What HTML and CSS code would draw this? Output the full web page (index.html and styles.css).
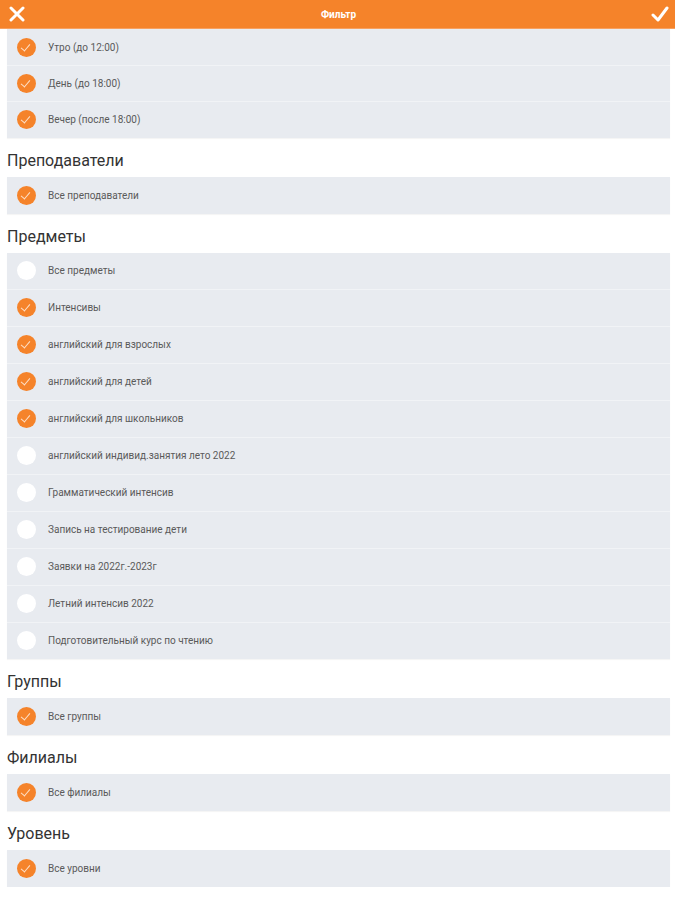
FILE: index.html
```html
<!DOCTYPE html>
<html lang="ru">
<head>
<meta charset="utf-8">
<title>Фильтр</title>
<link rel="stylesheet" href="styles.css">
</head>
<body>
<header class="topbar">
  <button class="icon-btn" aria-label="Закрыть">
    <svg width="16" height="16" viewBox="0 0 16 16"><path d="M2 2 L14 14 M14 2 L2 14" stroke="#fff" stroke-width="3" stroke-linecap="round"/></svg>
  </button>
  <div class="title">Фильтр</div>
  <button class="icon-btn" aria-label="Применить">
    <svg width="18" height="16" viewBox="0 0 18 16"><path d="M2 9 L7 14 L16 2" stroke="#fff" stroke-width="3" fill="none" stroke-linecap="round" stroke-linejoin="round"/></svg>
  </button>
</header>
<main class="content">
  <section class="card first">
    <div class="row"><span class="chk on"></span><span class="label">Утро (до 12:00)</span></div>
    <div class="row"><span class="chk on"></span><span class="label">День (до 18:00)</span></div>
    <div class="row"><span class="chk on"></span><span class="label">Вечер (после 18:00)</span></div>
  </section>

  <h2 class="heading">Преподаватели</h2>
  <section class="card">
    <div class="row"><span class="chk on"></span><span class="label">Все преподаватели</span></div>
  </section>

  <h2 class="heading">Предметы</h2>
  <section class="card">
    <div class="row"><span class="chk"></span><span class="label">Все предметы</span></div>
    <div class="row"><span class="chk on"></span><span class="label">Интенсивы</span></div>
    <div class="row"><span class="chk on"></span><span class="label">английский для взрослых</span></div>
    <div class="row"><span class="chk on"></span><span class="label">английский для детей</span></div>
    <div class="row"><span class="chk on"></span><span class="label">английский для школьников</span></div>
    <div class="row"><span class="chk"></span><span class="label">английский индивид.занятия лето 2022</span></div>
    <div class="row"><span class="chk"></span><span class="label">Грамматический интенсив</span></div>
    <div class="row"><span class="chk"></span><span class="label">Запись на тестирование дети</span></div>
    <div class="row"><span class="chk"></span><span class="label">Заявки на 2022г.-2023г</span></div>
    <div class="row"><span class="chk"></span><span class="label">Летний интенсив 2022</span></div>
    <div class="row"><span class="chk"></span><span class="label">Подготовительный курс по чтению</span></div>
  </section>

  <h2 class="heading">Группы</h2>
  <section class="card">
    <div class="row"><span class="chk on"></span><span class="label">Все группы</span></div>
  </section>

  <h2 class="heading">Филиалы</h2>
  <section class="card">
    <div class="row"><span class="chk on"></span><span class="label">Все филиалы</span></div>
  </section>

  <h2 class="heading">Уровень</h2>
  <section class="card">
    <div class="row"><span class="chk on"></span><span class="label">Все уровни</span></div>
  </section>
</main>
</body>
</html>
```

FILE: styles.css
```css
* { box-sizing: border-box; }
html, body { margin: 0; padding: 0; background: #fff; }
body { font-family: Roboto, "Noto Sans", "Liberation Sans", sans-serif; color: #333; }

.topbar {
  height: 29px;
  background: #f5832a;
  border-bottom: 1px solid #f7a060;
  display: flex;
  align-items: center;
  justify-content: space-between;
  padding: 0 6px 0 8px;
}
.icon-btn {
  background: none;
  border: 0;
  padding: 0;
  width: 18px;
  height: 18px;
  display: flex;
  align-items: center;
  justify-content: center;
}
.title {
  color: #fff;
  font-size: 10px;
  font-weight: 700;
}

.content { padding: 0 5px 0 7px; }

.card {
  background: #e8ebf0;
  box-shadow: 0 1px 1px rgba(0,0,0,0.04);
}
.row {
  height: 37px;
  display: flex;
  align-items: center;
  padding-left: 10px;
  border-top: 1px solid #f1f3f6;
}
.row:first-child { border-top: 0; height: 36px; }
.row:only-child { height: 37px; }
.card.first .row { height: 36.2px; }

.chk {
  width: 19px;
  height: 19px;
  border-radius: 50%;
  background: #fff;
  flex: none;
  position: relative;
}
.chk.on { background: #f5832a; }
.chk.on::after {
  content: "";
  position: absolute;
  left: 6px;
  top: 4px;
  width: 4px;
  height: 8px;
  border-right: 1.3px solid #fde0c8;
  border-bottom: 1.3px solid #fde0c8;
  transform: rotate(40deg);
}
.label {
  margin-left: 12px;
  font-size: 10px;
  color: #5a5a5a;
}

.heading {
  margin: 0;
  padding: 13px 0 6px 0;
  font-size: 16px;
  line-height: 20px;
  font-weight: 400;
  color: #333;
}
```
